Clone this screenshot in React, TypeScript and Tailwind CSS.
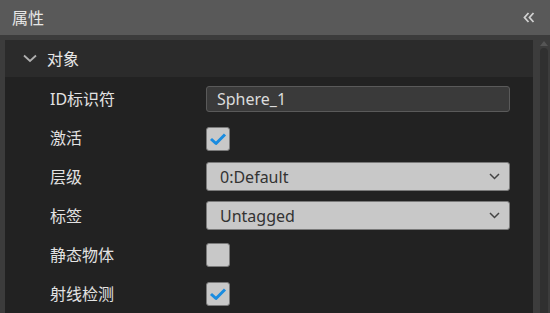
// Inspector "属性" panel with an object section of fields.

const font = { fontFamily: '"Noto Sans", "Noto Sans CJK SC", sans-serif' };

function Check({ checked }: { checked: boolean }) {
  return (
    <div className="w-[24px] h-[24px] rounded-[3px] border border-[#7a7a7a] bg-[#c8c8c8] flex items-center justify-center">
      {checked && (
        <svg width="18" height="14" viewBox="0 0 18 14">
          <polyline points="2,7 7,11.5 16,2.5" fill="none" stroke="#1a8ce0" strokeWidth="3" strokeLinejoin="round" />
        </svg>
      )}
    </div>
  );
}

function Select({ value }: { value: string }) {
  return (
    <div className="w-[304px] h-[29px] rounded-[3px] border border-[#7a7a7a] bg-[#c8c8c8] flex items-center justify-between pl-[13px] pr-[9px] text-[16px] text-[#333]">
      <span>{value}</span>
      <svg width="11" height="7" viewBox="0 0 11 7">
        <polyline points="1,1 5.5,5.5 10,1" fill="none" stroke="#444" strokeWidth="1.5" />
      </svg>
    </div>
  );
}

function Row({ label, children }: { label: string; children: React.ReactNode }) {
  return (
    <div className="h-[39px] flex items-center pl-[45px]">
      <div className="w-[156px] text-[16px] text-[#e2e2e2]">{label}</div>
      {children}
    </div>
  );
}

export default function App() {
  return (
    <div className="w-[550px] h-[313px] bg-[#3c3c3c] flex flex-col overflow-hidden" style={font}>
      <div className="h-[35px] shrink-0 bg-[#595959] flex items-center justify-between pl-[12px] pr-[15px]">
        <span className="text-[16px] text-[#e6e6e6]">属性</span>
        <svg width="12" height="11" viewBox="0 0 12 11">
          <polyline points="5.5,1 1.5,5.5 5.5,10" fill="none" stroke="#d0d0d0" strokeWidth="1.8" />
          <polyline points="10.5,1 6.5,5.5 10.5,10" fill="none" stroke="#d0d0d0" strokeWidth="1.8" />
        </svg>
      </div>
      <div className="flex-1 flex pt-[5px] pl-[5px] pb-[2px]">
        <div className="flex-1 bg-[#222222] flex flex-col">
          <div className="h-[37px] shrink-0 bg-[#2b2b2b] flex items-center pl-[18px]">
            <svg width="14" height="9" viewBox="0 0 14 9" className="mr-[10px]">
              <polyline points="1,1.5 7,7 13,1.5" fill="none" stroke="#b0b0b0" strokeWidth="1.8" />
            </svg>
            <span className="text-[16px] text-[#e6e6e6]">对象</span>
          </div>
          <div className="pt-[2px] flex flex-col">
            <Row label="ID标识符">
              <div className="w-[304px] h-[26px] rounded-[3px] border border-[#5a5a5a] bg-[#3a3a3a] flex items-center pl-[10px] text-[16px] text-[#dcdcdc]">
                Sphere_1
              </div>
            </Row>
            <Row label="激活">
              <div className="pt-[2px]">
                <Check checked />
              </div>
            </Row>
            <Row label="层级">
              <Select value="0:Default" />
            </Row>
            <Row label="标签">
              <Select value="Untagged" />
            </Row>
            <Row label="静态物体">
              <Check checked={false} />
            </Row>
            <Row label="射线检测">
              <Check checked />
            </Row>
          </div>
        </div>
        <div className="w-[17px] flex flex-col items-center pl-[7px] pr-[2px]">
          <svg width="8" height="5" viewBox="0 0 8 5" className="mt-[1px] mb-[2px]">
            <polygon points="4,0 8,5 0,5" fill="#555" />
          </svg>
          <div className="w-full flex-1 rounded-t-[4px] bg-[#303030]" />
        </div>
      </div>
    </div>
  );
}
